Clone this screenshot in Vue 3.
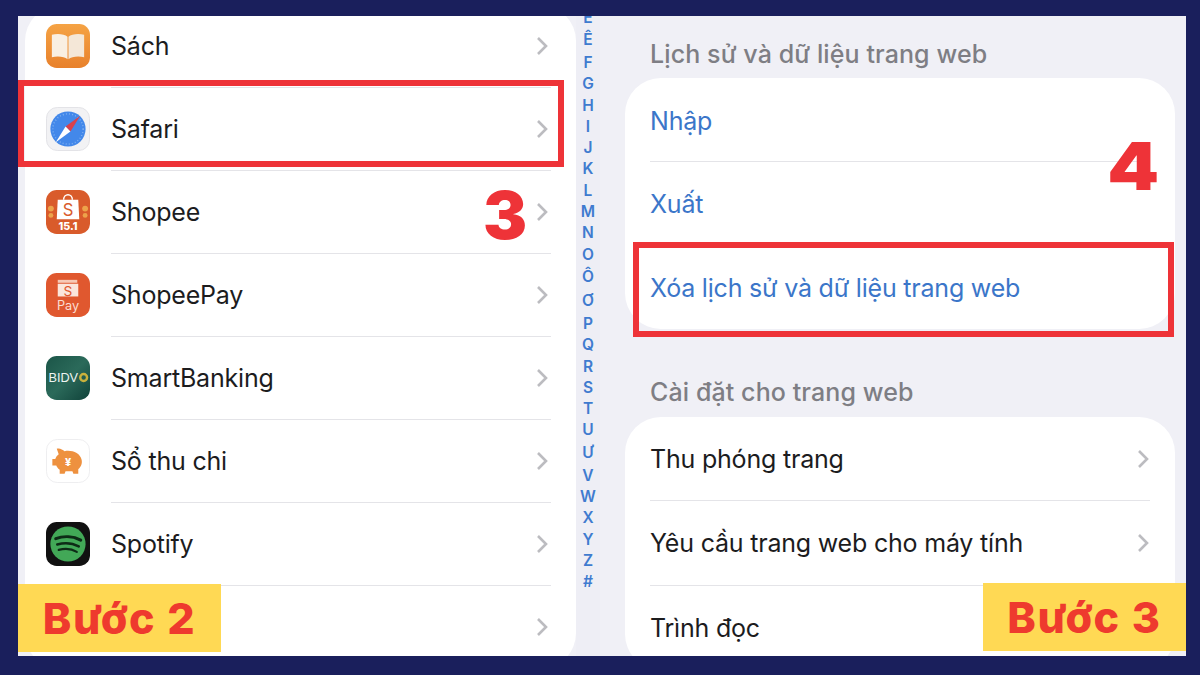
<script setup>
const leftRows = ['Sách','Safari','Shopee','ShopeePay','SmartBanking','Sổ thu chi','Spotify','']
const icons = ['book','safari','shopee','pay','bidv','piggy','spotify','']
const letters = 'E Ê F G H I J K L M N O Ô Ơ P Q R S T U Ư V W X Y Z #'.split(' ')
const tall = ['Ê','Ô','Ơ','Ư']
</script>

<template>
  <main class="frame">
    <section class="left-card">
      <div v-for="(name, i) in leftRows" :key="i" class="app-row">
        <span class="icon-slot">
          <svg v-if="icons[i]==='book'" viewBox="0 0 45 45" class="icon">
            <defs><linearGradient id="bk" x1="0" y1="0" x2="0" y2="1"><stop offset="0" stop-color="#f5a344"/><stop offset="1" stop-color="#e8812c"/></linearGradient></defs>
            <rect width="45" height="45" rx="11" fill="url(#bk)"/>
            <path d="M22 13C19 10 11 9.500 6 11V34C11 32.500 19 33 22 36Z" fill="#f9efe2"/>
            <path d="M23 13C26 10 34 9.500 39 11V34C34 32.500 26 33 23 36Z" fill="#f4e7d7"/>
          </svg>
          <svg v-else-if="icons[i]==='safari'" viewBox="0 0 45 45" class="icon">
            <rect x=".5" y=".5" width="44" height="44" rx="11" fill="#f2f2f4" stroke="#e2e2e6"/>
            <circle cx="22.500" cy="22.500" r="18" fill="#4388ea"/>
            <circle cx="22.500" cy="22.500" r="15.500" fill="none" stroke="#7fb0f0" stroke-width="1.500" stroke-dasharray="1 2.200"/>
            <path d="M35 9 25 25 20 20Z" fill="#d9414d"/>
            <path d="M10 36 20 20 25 25Z" fill="#fff"/>
          </svg>
          <svg v-else-if="icons[i]==='shopee'" viewBox="0 0 45 45" class="icon">
            <rect width="45" height="45" rx="11" fill="#d95b2b"/>
            <circle cx="5" cy="19" r="3" fill="#eda34a"/><circle cx="40" cy="19" r="3" fill="#eda34a"/>
            <circle cx="5" cy="26" r="2.500" fill="#eda34a"/><circle cx="40" cy="26" r="2.500" fill="#eda34a"/>
            <path d="M18 10C18 3 27 3 27 10" fill="none" stroke="#fff" stroke-width="1.500"/>
            <path d="M12 10H33L34 30H11Z" fill="#fff"/>
            <text x="22.500" y="27" text-anchor="middle" class="svg-s" font-size="17" fill="#d95b2b">S</text>
            <text x="22.500" y="41" text-anchor="middle" class="svg-b" font-size="11" fill="#fff">15.1</text>
          </svg>
          <svg v-else-if="icons[i]==='pay'" viewBox="0 0 45 45" class="icon">
            <rect width="45" height="45" rx="11" fill="#e0582f"/>
            <path d="M12 7H32V10H12Z" fill="#f7c9b6"/>
            <rect x="12" y="11" width="21" height="13" fill="#fbe6dc"/>
            <text x="22.500" y="23.500" text-anchor="middle" class="svg-s" font-size="14" fill="#e0582f">S</text>
            <text x="22.500" y="38" text-anchor="middle" class="svg-s" font-size="13" fill="#fbdccf">Pay</text>
          </svg>
          <svg v-else-if="icons[i]==='bidv'" viewBox="0 0 45 45" class="icon">
            <defs><linearGradient id="bd" x1="0" y1="0" x2="1" y2="1"><stop offset="0" stop-color="#1b5548"/><stop offset=".5" stop-color="#2b6a5a"/><stop offset="1" stop-color="#10423a"/></linearGradient></defs>
            <rect width="45" height="45" rx="11" fill="url(#bd)"/>
            <text x="2.500" y="27" class="svg-m" font-size="13" fill="#eef4f2">BIDV</text>
            <circle cx="38.500" cy="22" r="3.500" fill="none" stroke="#c9b13c" stroke-width="2.500"/>
          </svg>
          <svg v-else-if="icons[i]==='piggy'" viewBox="0 0 45 45" class="icon">
            <rect x=".5" y=".5" width="44" height="44" rx="11" fill="#fff" stroke="#eeeef0"/>
            <path d="M11 10C14 9 17 11 19 12.500C26 11 35 14 36.500 21.500C37.500 27 34 30 33 31V35.500H28L27 33H20L19 35.500H14V31.500C12 30 11 28 10.500 27H6.500V20.500H9.500C10 18.500 11.500 16.500 13 15.500Z" fill="#ee913f"/>
            <text x="22.500" y="28" text-anchor="middle" class="svg-b" font-size="11" fill="#fff">¥</text>
          </svg>
          <svg v-else-if="icons[i]==='spotify'" viewBox="0 0 45 45" class="icon">
            <rect width="45" height="45" rx="11" fill="#111"/>
            <circle cx="22.500" cy="22.500" r="18" fill="#42a857"/>
            <g fill="none" stroke="#0d2b16" stroke-linecap="round">
              <path d="M10 17C18 14 28 14.500 35.500 18.500" stroke-width="3.200"/>
              <path d="M11.500 23C18.500 21 27 21.500 33.500 25" stroke-width="2.600"/>
              <path d="M13 28.500C19 27 26.500 27.500 31.500 30.500" stroke-width="2.200"/>
            </g>
          </svg>
        </span>
        <div class="row-body" :class="{ last: i === leftRows.length - 1 }">
          <span class="label">{{ name }}</span>
          <svg class="chev" viewBox="0 0 12 20"><path d="M2 2l8 8-8 8" /></svg>
        </div>
      </div>
    </section>

    <nav class="index">
      <span v-for="l in letters" :key="l" class="letter" :class="{ tall: tall.includes(l) }">{{ l }}</span>
    </nav>

    <section class="right">
      <h2 class="section-title first">Lịch sử và dữ liệu trang web</h2>
      <div class="group">
        <div class="set-row"><div class="set-body link">Nhập</div></div>
        <div class="set-row"><div class="set-body link">Xuất</div></div>
        <div class="set-row"><div class="set-body link last">Xóa lịch sử và dữ liệu trang web</div></div>
      </div>
      <h2 class="section-title second">Cài đặt cho trang web</h2>
      <div class="group lower">
        <div class="set-row"><div class="set-body">Thu phóng trang<svg class="chev" viewBox="0 0 12 20"><path d="M2 2l8 8-8 8" /></svg></div></div>
        <div class="set-row"><div class="set-body">Yêu cầu trang web cho máy tính<svg class="chev" viewBox="0 0 12 20"><path d="M2 2l8 8-8 8" /></svg></div></div>
        <div class="set-row"><div class="set-body last">Trình đọc</div></div>
      </div>
    </section>

    <div class="red-box box-a"></div>
    <div class="red-box box-b"></div>
    <span class="num num-3">3</span>
    <span class="num num-4">4</span>
    <div class="step step-2">Bước 2</div>
    <div class="step step-3">Bước 3</div>
  </main>
</template>

<style scoped>
.frame {
  position: relative;
  display: flex;
  width: 1168px;
  height: 640px;
  margin: 16px 0 0 18px;
  overflow: hidden;
  background: #f0f0f6;
  font-family: Inter, "Liberation Sans", sans-serif;
  color: #1c1c1e;
}
.left-card {
  flex: none;
  width: 551px;
  height: 664px;
  margin: -11.5px 0 0 7px;
  background: #fff;
  border-radius: 36px;
}
.app-row {
  display: flex;
  align-items: center;
  height: 83px;
}
.icon-slot {
  flex: none;
  width: 44px;
  height: 44px;
  margin: 0 21px;
}
.icon { display: block; width: 44px; height: 44px; }
.row-body {
  flex: 1;
  align-self: stretch;
  display: flex;
  align-items: center;
  justify-content: space-between;
  margin-right: 25px;
  padding-right: 3px;
  border-bottom: 1.5px solid #e4e4e8;
}
.row-body.last { border-bottom: 0; }
.label { font-size: 25px; letter-spacing: -0.2px; }
.chev {
  flex: none;
  width: 12px;
  height: 20px;
  fill: none;
  stroke: #bcbcc0;
  stroke-width: 2.6;
}
.index {
  flex: none;
  width: 24px;
  margin: -9.5px 0 0 0;
  display: flex;
  flex-direction: column;
  align-items: center;
  background: #eeeef5;
  height: 660px;
}
.letter {
  display: flex;
  align-items: center;
  height: 21.3px;
  font-size: 15.5px;
  font-weight: 600;
  color: #3f7bcf;
}
.letter.tall { height: 24px; }
.right {
  flex: none;
  width: 550px;
  margin-left: 25px;
}
.section-title {
  margin: 0;
  height: 24px;
  line-height: 24px;
  padding-left: 25px;
  font-size: 25px;
  font-weight: 500;
  color: #7e7e84;
  white-space: nowrap;
  letter-spacing: 0.1px;
}
.section-title.first { margin-top: 26px; margin-bottom: 12px; }
.section-title.second { margin-top: 51.5px; margin-bottom: 13px; }
.group {
  background: #fff;
  border-radius: 36px;
}
.set-row {
  height: 83.5px;
  padding-left: 25px;
}
.lower .set-row { height: 84.3px; }
.set-body {
  box-sizing: border-box;
  height: 100%;
  display: flex;
  align-items: center;
  justify-content: space-between;
  margin-right: 25px;
  padding-right: 1px;
  border-bottom: 1.5px solid #e4e4e8;
  font-size: 25px;
  letter-spacing: -0.2px;
  white-space: nowrap;
}
.set-body.last { border-bottom: 0; }
.link { color: #3b76c9; padding-top: 3px; }
.red-box {
  position: absolute;
  box-sizing: border-box;
  border: 6px solid #ee3338;
}
.box-a { left: 0; top: 64px; width: 546px; height: 87px; }
.box-b { left: 615px; top: 226px; width: 541px; height: 95px; }
.num {
  position: absolute;
  font-weight: 900;
  font-size: 66px;
  line-height: 1;
  color: #ee3338;
}
.num-3 { left: 465px; top: 166px; }
.num-4 { left: 1092px; top: 117px; transform: scaleX(1.12); }
.step {
  position: absolute;
  display: flex;
  align-items: center;
  justify-content: center;
  width: 203px;
  height: 68px;
  background: #ffd954;
  color: #ee3a2e;
  font-size: 43px;
  font-weight: 800;
  letter-spacing: 1.6px;
}
.step-2 { left: 0; top: 568px; }
.step-3 { left: 965px; top: 567px; }
.svg-s { font-family: Inter, "Liberation Sans", sans-serif; font-weight: 400; }
.svg-m { font-family: "Liberation Sans", sans-serif; font-weight: 400; }
.svg-b { font-family: Inter, "Liberation Sans", sans-serif; font-weight: 800; }
</style>

<style>
html, body { margin: 0; background: #1a1f5c; }
</style>
